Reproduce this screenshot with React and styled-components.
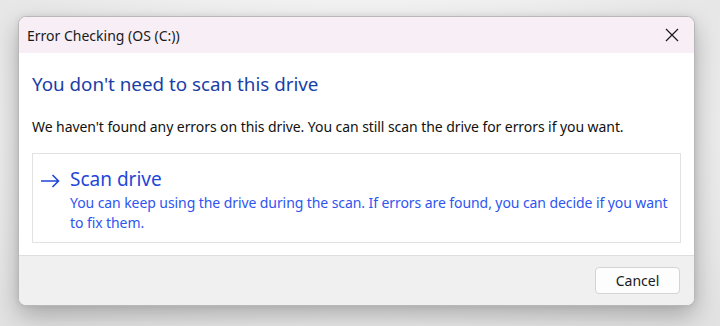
import React from 'react';
import styled, { createGlobalStyle } from 'styled-components';

const Global = createGlobalStyle`
  html, body {
    margin: 0;
    height: 100%;
    background: #ececec;
  }
  body {
    font-family: "Noto Sans", "Open Sans", sans-serif;
    background: radial-gradient(ellipse at 50% 40%, #f4f4f4 40%, #e2e2e2 100%);
  }
`;

const Page = styled.div`
  width: 720px;
  height: 326px;
  padding: 16px 0 0 18px;
  box-sizing: border-box;
`;

const Window = styled.div`
  width: 677px;
  height: 290px;
  box-sizing: border-box;
  border: 1px solid #b8b8b8;
  border-radius: 8px;
  overflow: hidden;
  background: #fff;
  display: flex;
  flex-direction: column;
  box-shadow: 0 10px 26px rgba(0, 0, 0, 0.28), 0 0 6px rgba(0, 0, 0, 0.08);
`;

const TitleBar = styled.div`
  height: 36px;
  background: #f7eef6;
  display: flex;
  align-items: center;
  justify-content: space-between;
  padding: 0 14px 0 8px;
`;

const Title = styled.span`
  font-size: 14px;
  color: #1a1a1a;
`;

const Close = styled.button`
  border: 0;
  background: none;
  padding: 0;
  width: 16px;
  height: 16px;
  display: flex;
  align-items: center;
  justify-content: center;
`;

const Content = styled.div`
  flex: 1;
  padding: 16px 13px 0 13px;
  display: flex;
  flex-direction: column;
`;

const Heading = styled.h1`
  margin: 0;
  font-size: 18.8px;
  font-weight: 400;
  color: #1a3ea6;
  line-height: 30px;
`;

const Message = styled.p`
  margin: 18px 0 0;
  font-size: 14px;
  letter-spacing: -0.07px;
  color: #111;
  line-height: 20px;
`;

const Option = styled.div`
  margin-top: 16px;
  border: 1px solid #e2e2e2;
  padding: 11px 6px 9px 7px;
  display: flex;
  gap: 10px;
`;

const Arrow = styled.div`
  padding-top: 6px;
  color: #1f47d8;
`;

const OptionText = styled.div`
  display: flex;
  flex-direction: column;
`;

const OptionTitle = styled.div`
  font-size: 19px;
  color: #1f47d8;
  line-height: 28px;
`;

const OptionDesc = styled.div`
  font-size: 14px;
  letter-spacing: -0.08px;
  color: #2e55f0;
  line-height: 20px;
`;

const Footer = styled.div`
  height: 50px;
  box-sizing: border-box;
  background: #f0f0f0;
  border-top: 1px solid #dedede;
  display: flex;
  align-items: center;
  justify-content: flex-end;
  padding-right: 14px;
`;

const Button = styled.button`
  width: 85px;
  height: 27px;
  background: #fdfdfd;
  border: 1px solid #d4d4d4;
  border-radius: 4px;
  font-family: inherit;
  font-size: 14px;
  color: #1a1a1a;
`;

export default function App() {
  return (
    <Page>
      <Global />
      <Window>
        <TitleBar>
          <Title>Error Checking (OS (C:))</Title>
          <Close aria-label="Close">
            <svg width="14" height="14" viewBox="0 0 14 14">
              <path d="M1 1 L13 13 M13 1 L1 13" stroke="#1a1a1a" strokeWidth="1.2" />
            </svg>
          </Close>
        </TitleBar>
        <Content>
          <Heading>You don't need to scan this drive</Heading>
          <Message>
            We haven't found any errors on this drive. You can still scan the drive for errors if you want.
          </Message>
          <Option>
            <Arrow>
              <svg width="20" height="14" viewBox="0 0 20 14">
                <path d="M1 7 H18.5 M12.5 1 L18.5 7 L12.5 13" fill="none" stroke="currentColor" strokeWidth="1.6" />
              </svg>
            </Arrow>
            <OptionText>
              <OptionTitle>Scan drive</OptionTitle>
              <OptionDesc>
                You can keep using the drive during the scan. If errors are found, you can decide if you want to fix them.
              </OptionDesc>
            </OptionText>
          </Option>
        </Content>
        <Footer>
          <Button>Cancel</Button>
        </Footer>
      </Window>
    </Page>
  );
}
